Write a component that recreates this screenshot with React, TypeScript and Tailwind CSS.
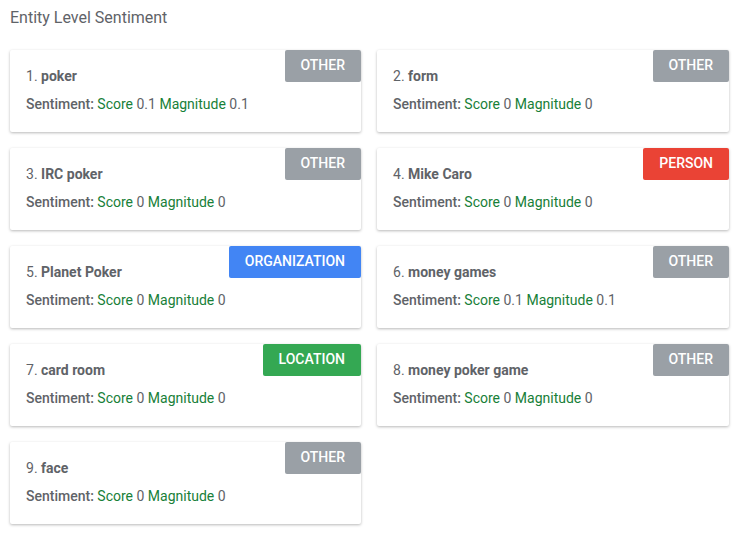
import React from "react";

type Entity = { name: string; type: string; score: string; magnitude: string };

const ENTITIES: Entity[] = [
  { name: "poker", type: "OTHER", score: "0.1", magnitude: "0.1" },
  { name: "form", type: "OTHER", score: "0", magnitude: "0" },
  { name: "IRC poker", type: "OTHER", score: "0", magnitude: "0" },
  { name: "Mike Caro", type: "PERSON", score: "0", magnitude: "0" },
  { name: "Planet Poker", type: "ORGANIZATION", score: "0", magnitude: "0" },
  { name: "money games", type: "OTHER", score: "0.1", magnitude: "0.1" },
  { name: "card room", type: "LOCATION", score: "0", magnitude: "0" },
  { name: "money poker game", type: "OTHER", score: "0", magnitude: "0" },
  { name: "face", type: "OTHER", score: "0", magnitude: "0" },
];

const BADGE: Record<string, string> = {
  OTHER: "bg-[#9aa0a6]",
  PERSON: "bg-[#ea4335]",
  ORGANIZATION: "bg-[#4285f4]",
  LOCATION: "bg-[#34a853]",
};

function EntityCard({ e, i }: { e: Entity; i: number }) {
  return (
    <div className="relative h-[82px] rounded-[2px] bg-white px-4 pt-[17px] shadow-[0_1px_3px_rgba(0,0,0,0.28)]">
      <span
        className={`absolute right-0 top-0 h-8 rounded-[2px] px-4 pt-[7px] text-[14px] font-medium leading-[16px] text-white ${BADGE[e.type]}`}
      >
        {e.type}
      </span>
      <div className="text-[14px] leading-[18px] text-[#5f6368]">
        {i + 1}. <span className="font-bold">{e.name}</span>
      </div>
      <div className="mt-[10px] text-[14px] leading-[18px] text-[#5f6368]">
        <span className="font-medium">Sentiment:</span>{" "}
        <span className="text-[#188038]">Score</span> {e.score}{" "}
        <span className="text-[#188038]">Magnitude</span> {e.magnitude}
      </div>
    </div>
  );
}

export default function App() {
  return (
    <div className="min-h-[540px] w-[743px] bg-white px-[10px] font-['Roboto',_'Liberation_Sans',_sans-serif]">
      <div className="pt-[8px] text-[16px] leading-[20px] text-[#5f6368]">Entity Level Sentiment</div>
      <div className="mt-[22px] grid grid-cols-[351px_352px] gap-x-4 gap-y-4">
        {ENTITIES.map((e, i) => (
          <EntityCard key={i} e={e} i={i} />
        ))}
      </div>
    </div>
  );
}
